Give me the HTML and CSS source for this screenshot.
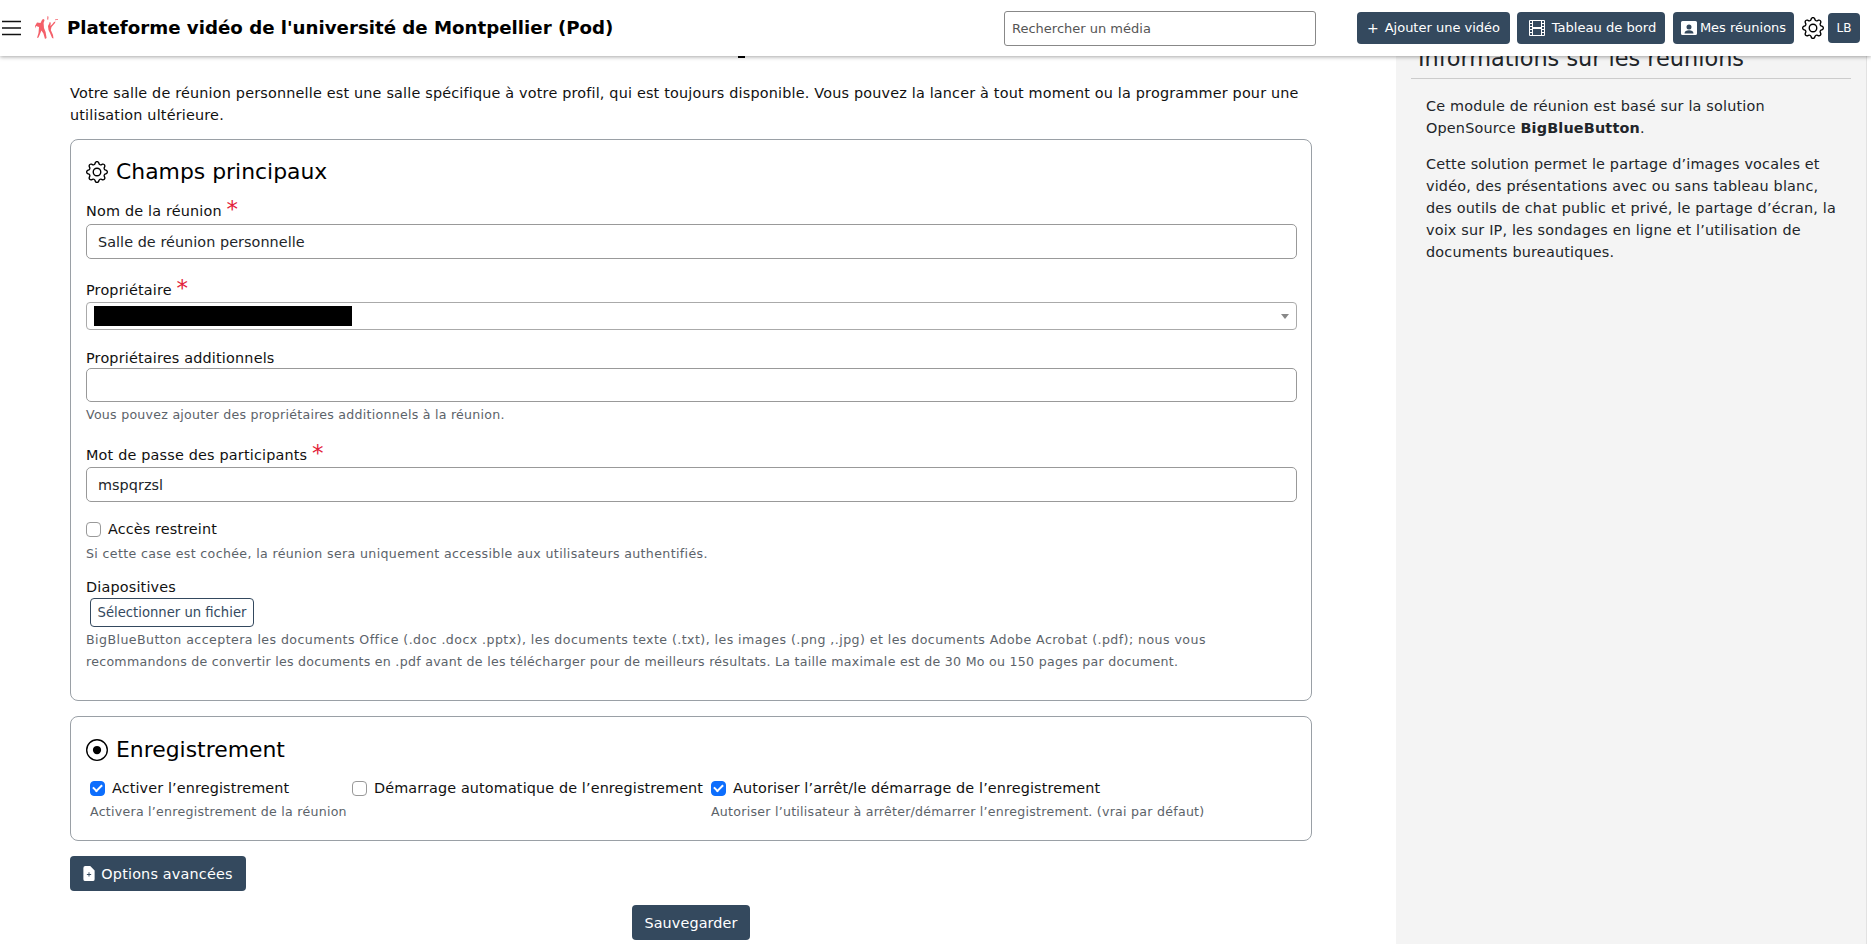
FILE: index.html
```html
<!DOCTYPE html>
<html lang="fr">
  <head>
    <meta charset="UTF-8" />
    <title>Plateforme vidéo de l'université de Montpellier (Pod)</title>
    <link rel="stylesheet" href="styles.css">
  </head>
  <body>
    <svg class="icon-defs" width="0" height="0">
      <symbol id="gear" viewBox="0 0 16 16">
        <path d="M8 4.754a3.246 3.246 0 1 0 0 6.492 3.246 3.246 0 0 0 0-6.492zM5.754 8a2.246 2.246 0 1 1 4.492 0 2.246 2.246 0 0 1-4.492 0z"/>
        <path d="M9.796 1.343c-.527-1.79-3.065-1.79-3.592 0l-.094.319a.873.873 0 0 1-1.255.52l-.292-.16c-1.64-.892-3.433.902-2.54 2.541l.159.292a.873.873 0 0 1-.52 1.255l-.319.094c-1.79.527-1.79 3.065 0 3.592l.319.094a.873.873 0 0 1 .52 1.255l-.16.292c-.892 1.64.901 3.434 2.541 2.54l.292-.159a.873.873 0 0 1 1.255.52l.094.319c.527 1.79 3.065 1.79 3.592 0l.094-.319a.873.873 0 0 1 1.255-.52l.292.16c1.64.893 3.434-.902 2.54-2.541l-.159-.292a.873.873 0 0 1 .52-1.255l.319-.094c1.79-.527 1.79-3.065 0-3.592l-.319-.094a.873.873 0 0 1-.52-1.255l.16-.292c.893-1.64-.902-3.433-2.541-2.54l-.292.159a.873.873 0 0 1-1.255-.52l-.094-.319zm-2.633.283c.246-.835 1.428-.835 1.674 0l.094.319a1.873 1.873 0 0 0 2.693 1.115l.291-.16c.764-.415 1.6.42 1.184 1.185l-.159.292a1.873 1.873 0 0 0 1.116 2.692l.318.094c.835.246.835 1.428 0 1.674l-.319.094a1.873 1.873 0 0 0-1.115 2.693l.16.291c.415.764-.42 1.6-1.185 1.184l-.291-.159a1.873 1.873 0 0 0-2.693 1.116l-.094.318c-.246.835-1.428.835-1.674 0l-.094-.319a1.873 1.873 0 0 0-2.692-1.115l-.292.16c-.764.415-1.6-.42-1.184-1.185l.159-.291A1.873 1.873 0 0 0 1.945 8.93l-.319-.094c-.835-.246-.835-1.428 0-1.674l.319-.094A1.873 1.873 0 0 0 3.06 4.377l-.16-.292c-.415-.764.42-1.6 1.185-1.184l.292.159a1.873 1.873 0 0 0 2.692-1.115l.094-.319z"/>
      </symbol>
    </svg>

    <header class="topbar">
      <svg class="burger" viewBox="0 0 19 16" width="19" height="16">
        <path d="M0 1.5h19M0 8h19M0 14.5h19" stroke="#111" stroke-width="1.5" fill="none"/>
      </svg>
      <svg class="logo" viewBox="0 0 24 24" width="24" height="24">
        <path fill="#f4606a" d="M9 3c1.4 0 1.800 1.200 1.200 2.200L9.600 7l.4 5 1.600 4 1 6-1.600 1-1.600-5.600-2-3L6 18l-1.500 3.500L3 22l1.500-5 .5-6L2 10l-.5 2.500L1 10l2-3.500L6.500 7 8 4z"/>
        <path fill="#f4606a" d="M15.500 6c1 0 1.500.8 1.200 1.800L16.400 10l1.600-1.500L20 6l1.500-.5L21 7l-3.500 4-.7 3 2.200 5 .5 3.500-1.400-.5-2.100-5-1.500-3-.5-4 1.500-3z"/>
        <path fill="#f4606a" d="M13.500 0l1 .8-.3 3-1-.2zM21 3.500l3-.5v.8l-3 .4z"/>
      </svg>
      <div class="site-title">Plateforme vidéo de l'université de Montpellier (Pod)</div>
      <input class="search" type="text" placeholder="Rechercher un média" />
      <nav class="top-actions">
        <a class="btn btn-add"><span class="plus">+</span> Ajouter une vidéo</a>
        <a class="btn btn-board">
          <svg viewBox="0 0 16 16" width="16" height="16" fill="#fff">
            <path d="M0 1a1 1 0 0 1 1-1h14a1 1 0 0 1 1 1v14a1 1 0 0 1-1 1H1a1 1 0 0 1-1-1V1zm4 0v6h8V1H4zm8 8H4v6h8V9zM1 1v2h2V1H1zm2 3H1v2h2V4zM1 7v2h2V7H1zm2 3H1v2h2v-2zm-2 3v2h2v-2H1zM15 1h-2v2h2V1zm-2 3v2h2V4h-2zm2 3h-2v2h2V7zm-2 3v2h2v-2h-2zm2 3h-2v2h2v-2z"/>
          </svg>
          Tableau de bord
        </a>
        <a class="btn btn-meet">
          <svg viewBox="0 0 16 14" width="16" height="14" fill="#fff">
            <path d="M1.500 0h13A1.500 1.500 0 0 1 16 1.500v11a1.500 1.500 0 0 1-1.500 1.500h-13A1.500 1.500 0 0 1 0 12.500v-11A1.500 1.500 0 0 1 1.500 0zM8 3.500a2.500 2.500 0 1 0 0 5 2.500 2.500 0 0 0 0-5zM3.500 12.500h9c0-2-2-3.200-4.500-3.200s-4.500 1.200-4.500 3.200z"/>
          </svg>
          Mes réunions
        </a>
        <svg class="top-gear" width="22" height="22"><use href="#gear"/></svg>
        <a class="btn btn-user">LB</a>
      </nav>
    </header>

    <div class="page">
      <main class="content">
        <div class="title-tail"></div>
        <p class="intro">Votre salle de réunion personnelle est une salle spécifique à votre profil, qui est toujours disponible. Vous pouvez la lancer à tout moment ou la programmer pour une utilisation ultérieure.</p>

        <section class="card card-main">
          <h2 class="card-title"><svg width="22" height="22"><use href="#gear"/></svg>Champs principaux</h2>

          <div class="field field-name">
            <label>Nom de la réunion <span class="req">*</span></label>
            <input class="text-input" type="text" value="Salle de réunion personnelle" />
          </div>

          <div class="field field-owner">
            <label>Propriétaire <span class="req">*</span></label>
            <div class="select-box">
              <span class="redacted"></span>
              <span class="caret"></span>
            </div>
          </div>

          <div class="field field-extra">
            <label>Propriétaires additionnels</label>
            <input class="text-input" type="text" />
            <p class="help">Vous pouvez ajouter des propriétaires additionnels à la réunion.</p>
          </div>

          <div class="field field-pass">
            <label>Mot de passe des participants <span class="req">*</span></label>
            <input class="text-input" type="text" value="mspqrzsl" />
          </div>

          <div class="field field-restricted">
            <div class="check-row"><input type="checkbox" /><span>Accès restreint</span></div>
            <p class="help">Si cette case est cochée, la réunion sera uniquement accessible aux utilisateurs authentifiés.</p>
          </div>

          <div class="field field-slides">
            <label>Diapositives</label>
            <button class="file-btn" type="button">Sélectionner un fichier</button>
            <p class="help help-long">BigBlueButton acceptera les documents Office (.doc .docx .pptx), les documents texte (.txt), les images (.png ,.jpg) et les documents Adobe Acrobat (.pdf); nous vous <span class="help-tight">recommandons de convertir les documents en .pdf avant de les télécharger pour de meilleurs résultats. La taille maximale est de 30 Mo ou 150 pages par document.</span></p>
          </div>
        </section>

        <section class="card card-record">
          <h2 class="card-title">
            <svg viewBox="0 0 16 16" width="22" height="22" fill="#000">
              <path d="M8 15A7 7 0 1 1 8 1a7 7 0 0 1 0 14zm0 1A8 8 0 1 0 8 0a8 8 0 0 0 0 16z"/>
              <circle cx="8" cy="8" r="3"/>
            </svg>Enregistrement
          </h2>
          <div class="record-grid">
            <div class="record-col col-one">
              <div class="check-row"><input type="checkbox" checked /><span>Activer l’enregistrement</span></div>
              <p class="help">Activera l’enregistrement de la réunion</p>
            </div>
            <div class="record-col col-two">
              <div class="check-row"><input type="checkbox" /><span>Démarrage automatique de l’enregistrement</span></div>
            </div>
            <div class="record-col col-three">
              <div class="check-row"><input type="checkbox" checked /><span>Autoriser l’arrêt/le démarrage de l’enregistrement</span></div>
              <p class="help">Autoriser l’utilisateur à arrêter/démarrer l’enregistrement. (vrai par défaut)</p>
            </div>
          </div>
        </section>

        <button class="btn btn-options" type="button">
          <svg viewBox="0 0 12 16" width="12" height="15" fill="#fff">
            <path d="M2 0h5.300L12 4.700V14a2 2 0 0 1-2 2H2a2 2 0 0 1-2-2V2a2 2 0 0 1 2-2zm4 6.500a.5.5 0 0 0-.5.5v1.500H4a.5.5 0 0 0 0 1h1.500V11a.5.5 0 0 0 1 0V9.500H8a.5.5 0 0 0 0-1H6.500V7a.5.5 0 0 0-.5-.5z"/>
          </svg>
          Options avancées
        </button>
        <div class="save-row"><button class="btn btn-save" type="button">Sauvegarder</button></div>
      </main>

      <aside class="sidebar">
        <h4 class="side-title">Informations sur les réunions</h4>
        <div class="side-body">
          <p>Ce module de réunion est basé sur la solution OpenSource <b>BigBlueButton</b>.</p>
          <p>Cette solution permet le partage d’images vocales et vidéo, des présentations avec ou sans tableau blanc, des outils de chat public et privé, le partage d’écran, la voix sur IP, les sondages en ligne et l’utilisation de documents bureautiques.</p>
        </div>
      </aside>
    </div>
  </body>
</html>
```

FILE: styles.css
```css
* {
  box-sizing: border-box;
}

html,
body {
  height: 100%;
}

body {
  margin: 0;
  overflow: hidden;
  background-color: #fff;
  color: #212529;
  font-family: "DejaVu Sans", Verdana, sans-serif;
  font-size: 14.4px;
  letter-spacing: 0.18px;
  line-height: 22px;
}

.icon-defs {
  display: block;
  height: 0;
}

.topbar {
  display: flex;
  align-items: center;
  height: 56px;
  padding-left: 2px;
  padding-right: 11px;
  background-color: #fff;
  box-shadow: 0 1px 4px rgba(0, 0, 0, 0.35);
  position: relative;
  z-index: 2;
}

.burger {
  flex: none;
}

.logo {
  flex: none;
  margin-left: 13px;
}

.site-title {
  margin-left: 9px;
  color: #000;
  font-size: 18.2px;
  font-weight: bold;
  letter-spacing: 0;
  white-space: nowrap;
}

.search {
  width: 312px;
  height: 35px;
  margin-left: auto;
  padding: 0 7px;
  border: 1px solid #888;
  border-radius: 3px;
  font: inherit;
  font-size: 13px;
  letter-spacing: 0;
}

.search::placeholder {
  color: #555;
}

.top-actions {
  display: flex;
  align-items: center;
  gap: 7px;
  margin-left: 41px;
}

.btn {
  display: inline-flex;
  align-items: center;
  justify-content: center;
  gap: 6px;
  height: 32px;
  border: none;
  border-radius: 4px;
  background-color: #34495e;
  color: #fff;
  font-family: inherit;
  font-size: 13px;
  letter-spacing: 0;
  white-space: nowrap;
}

.btn-add {
  width: 153px;
}

.plus {
  font-size: 14px;
}

.btn-board {
  width: 148px;
  padding-left: 3px;
  gap: 7px;
  font-size: 13.1px;
}

.btn-meet {
  width: 121px;
  margin-left: 1px;
  gap: 3px;
}

.top-gear {
  margin-left: 1px;
}

.btn-user {
  width: 32px;
  height: 30px;
  margin-left: -3px;
  font-size: 12px;
}

.page {
  display: grid;
  grid-template-columns: 1396px 471px;
  height: 888px;
  overflow: hidden;
}

.content {
  padding: 0 84px 0 70px;
}

.title-tail {
  width: 7px;
  height: 2px;
  margin-left: 668px;
  background-color: #000;
}

.intro {
  margin: 24px 0 0;
  color: #111;
}

.card {
  border: 1px solid #9aa0a6;
  border-radius: 8px;
  padding: 0 14px 0 15px;
}

.card-main {
  height: 562px;
  margin-top: 13px;
  padding-top: 17px;
}

.card-title {
  display: flex;
  align-items: center;
  gap: 8px;
  margin: 0;
  color: #000;
  font-size: 21.9px;
  font-weight: normal;
  letter-spacing: 0;
  line-height: 30px;
}

.field label {
  display: block;
  color: #111;
  line-height: 22px;
}

.req {
  color: #e3213a;
  font-size: 23px;
  line-height: 0;
  vertical-align: -1px;
}

.text-input {
  display: block;
  width: 100%;
  height: 35px;
  padding: 0 11px;
  border: 1px solid #999;
  border-radius: 5px;
  color: #212529;
  font: inherit;
  letter-spacing: 0.05px;
}

.help {
  margin: 4px 0 0;
  color: #5c636a;
  font-size: 12.6px;
  letter-spacing: 0.25px;
  line-height: 20px;
}

.field-name {
  margin-top: 13px;
}

.field-name label {
  margin-bottom: 2px;
}

.field-owner {
  margin-top: 20px;
}

.field-owner label {
  margin-bottom: 1px;
}

.select-box {
  display: flex;
  align-items: center;
  justify-content: space-between;
  height: 28px;
  padding: 0 7px;
  border: 1px solid #aaa;
  border-radius: 4px;
}

.redacted {
  width: 258px;
  height: 20px;
  background-color: #000;
}

.caret {
  width: 0;
  height: 0;
  border-left: 4px solid transparent;
  border-right: 4px solid transparent;
  border-top: 5px solid #888;
}

.field-extra {
  margin-top: 18px;
}

.field-extra label {
  line-height: 20px;
}

.field-extra .text-input {
  height: 34px;
}

.field-extra .help {
  margin-top: 3px;
}

.field-pass {
  margin-top: 19px;
}

.field-pass label {
  margin-bottom: 1px;
}

.field-restricted {
  margin-top: 16px;
}

.field-restricted .help {
  letter-spacing: 0.35px;
}

.check-row {
  display: flex;
  align-items: center;
  gap: 7px;
  color: #111;
  letter-spacing: 0.12px;
  white-space: nowrap;
}

input[type="checkbox"] {
  appearance: none;
  display: inline-flex;
  align-items: center;
  justify-content: center;
  flex: none;
  width: 15px;
  height: 15px;
  margin: 0;
  border: 1px solid #999;
  border-radius: 4px;
  background-color: #fff;
}

input[type="checkbox"]:checked {
  border-color: #0d6efd;
  background-color: #0d6efd;
}

input[type="checkbox"]:checked::after {
  content: "";
  width: 7px;
  height: 4px;
  margin-top: -2px;
  border-left: 2px solid #fff;
  border-bottom: 2px solid #fff;
  transform: rotate(-45deg);
}

.field-slides {
  margin-top: 13px;
}

.field-slides label {
  line-height: 21px;
}

.file-btn {
  display: block;
  width: 164px;
  height: 29px;
  margin-left: 4px;
  padding: 0;
  border: 1px solid #34495e;
  border-radius: 4px;
  background-color: #fff;
  color: #34495e;
  font: inherit;
  font-size: 13.2px;
  letter-spacing: 0;
}

.help-long {
  margin-top: 2px;
  letter-spacing: 0.43px;
  line-height: 22px;
}

.help-tight {
  letter-spacing: 0.27px;
}

.card-record {
  height: 125px;
  margin-top: 15px;
  padding-top: 18px;
}

.record-grid {
  display: flex;
  margin-top: 12px;
  margin-left: 4px;
}

.col-one {
  width: 262px;
}

.col-two {
  width: 359px;
}

.record-col .help {
  margin-top: 3px;
}

.btn-options {
  width: 176px;
  height: 35px;
  margin-top: 15px;
  font-size: 14.4px;
  letter-spacing: 0.18px;
}

.save-row {
  display: flex;
  justify-content: center;
  margin-top: 14px;
}

.btn-save {
  width: 118px;
  height: 35px;
  font-size: 14.4px;
  letter-spacing: 0.1px;
}

.sidebar {
  height: 100%;
  padding: 0 15px;
  border-right: 1px solid #e2e2e2;
  background-color: #f4f4f4;
}

.side-title {
  margin: -13px 0 0 7px;
  padding-bottom: 5px;
  color: #212529;
  font-size: 22.4px;
  font-weight: normal;
  letter-spacing: 0;
  line-height: 30px;
}

.side-body {
  padding: 16px 15px 0;
  border-top: 1px solid #ccc;
}

.side-body p {
  margin: 0 0 14px;
}
```
